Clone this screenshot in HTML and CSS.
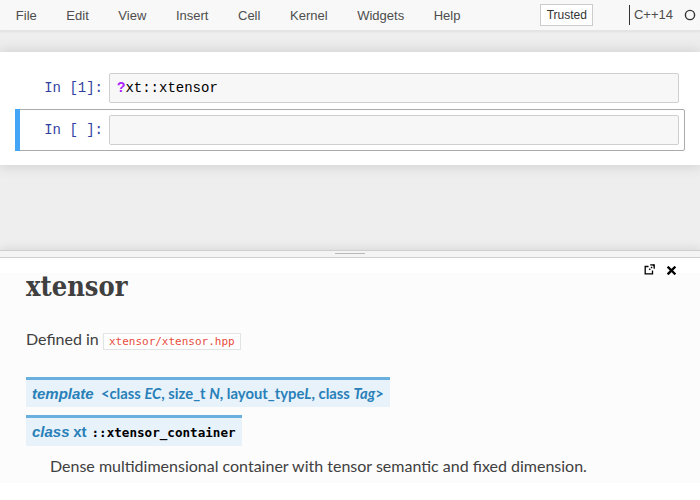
FILE: index.html
```html
<!DOCTYPE html>
<html>
<head>
<meta charset="utf-8">
<title>Notebook</title>
<link rel="stylesheet" href="styles.css">
</head>
<body>
<header class="menubar">
  <nav class="menus">
    <span class="menu">File</span>
    <span class="menu">Edit</span>
    <span class="menu">View</span>
    <span class="menu">Insert</span>
    <span class="menu">Cell</span>
    <span class="menu">Kernel</span>
    <span class="menu">Widgets</span>
    <span class="menu">Help</span>
  </nav>
  <div class="status">
    <span class="trusted">Trusted</span>
    <span class="kernel-name">C++14</span>
    <svg class="kernel-icon" width="12" height="12" viewBox="0 0 12 12"><circle cx="6" cy="6" r="4.6" fill="none" stroke="#333" stroke-width="1.4"/></svg>
  </div>
</header>
<main class="site">
  <div class="notebook">
    <div class="cell">
      <div class="prompt">In&nbsp;[1]:</div>
      <div class="input"><span class="qmark">?</span>xt::xtensor</div>
    </div>
    <div class="cell selected">
      <div class="prompt">In&nbsp;[&nbsp;]:</div>
      <div class="input"></div>
    </div>
  </div>
</main>
<section class="pager">
  <div class="divider"><span class="handle"></span></div>
  <div class="pager-contents">
    <div class="pager-buttons">
      <svg width="11" height="11" viewBox="0 0 11 11"><path d="M4.5 2.5H1.2v7.3h7.3V6.5" fill="none" stroke="#000" stroke-width="1.3"/><path d="M6.2 0.8h4v4" fill="none" stroke="#000" stroke-width="1.3"/><path d="M10 1L5 6" stroke="#000" stroke-width="1.3" stroke-dasharray="1.6 1"/></svg>
      <svg width="9" height="9" viewBox="0 0 9 9"><path d="M1.5 1.5L7.5 7.5M7.5 1.5L1.5 7.5" stroke="#000" stroke-width="2.4" stroke-linecap="square"/></svg>
    </div>
    <article class="doc">
      <h1 class="doc-title">xtensor</h1>
      <p class="defined">Defined in <code class="lit">xtensor/xtensor.hpp</code></p>
      <dl class="sig">
        <dt class="sig-head"><em class="kw">template</em>&nbsp;&nbsp;&lt;class <em>EC</em>, size_t <em>N</em>, layout_type<em>L</em>, class <em>Tag</em>&gt;</dt>
        <dt class="sig-head"><em class="kw">class</em>&nbsp;<span class="ns">xt</span><code class="descname">::xtensor_container</code></dt>
        <dd class="desc">Dense multidimensional container with tensor semantic and fixed dimension.</dd>
      </dl>
    </article>
  </div>
</section>
</body>
</html>
```

FILE: styles.css
```css
* { box-sizing: border-box; }
html, body { margin: 0; padding: 0; }
body {
  width: 700px;
  height: 500px;
  overflow: hidden;
  display: flex;
  flex-direction: column;
  font-family: "Liberation Sans", Arial, sans-serif;
  background: #fff;
}

/* menubar */
.menubar {
  height: 31px;
  flex: none;
  display: flex;
  align-items: center;
  justify-content: space-between;
  background: #f8f8f8;
  border-bottom: 1px solid #e4e4e4;
  box-shadow: 0 1px 2px rgba(0,0,0,0.06);
  position: relative;
  z-index: 2;
  font-size: 13px;
  color: #4d4d4d;
}
.menus { display: flex; padding-left: 1px; }
.menu { padding: 0 14.8px; }
.status { display: flex; align-items: center; padding-right: 4px; }
.trusted {
  border: 1px solid #ccc;
  background: #fff;
  font-size: 12px;
  color: #333;
  padding: 4px 5px 3px 6px;
  margin-right: 36px;
  line-height: 13px;
}
.kernel-name {
  border-left: 1px solid #333;
  padding-left: 4px;
  line-height: 20px;
  color: #4d4d4d;
}
.kernel-icon { margin-left: 11px; }

/* notebook */
.site {
  flex: 1;
  background: #eee;
  padding-top: 21px;
}
.notebook {
  background: #fff;
  box-shadow: 0 0 12px 1px rgba(87,87,87,0.2);
  padding: 15px 15px 14px 15px;
}
.cell {
  display: flex;
  align-items: center;
  border: 1px solid transparent;
  border-radius: 2px;
  padding: 5px;
  position: relative;
}
.cell.selected { border-color: #ababab; }
.cell.selected::before {
  content: "";
  position: absolute;
  left: -1px;
  top: -1px;
  bottom: -1px;
  width: 5px;
  background: #42a5f5;
}
.prompt {
  width: 88px;
  flex: none;
  text-align: right;
  padding-right: 6px;
  font-family: "Liberation Mono", monospace;
  font-size: 14px;
  color: #303f9f;
}
.input {
  flex: 1;
  height: 30px;
  background: #f7f7f7;
  border: 1px solid #cfcfcf;
  border-radius: 2px;
  padding: 0 7px;
  font-family: "Liberation Mono", monospace;
  font-size: 14px;
  line-height: 28px;
  color: #000;
}
.qmark { color: #a2f; font-weight: bold; }

/* pager */
.pager {
  height: 250px;
  flex: none;
  display: flex;
  flex-direction: column;
  box-shadow: 0 -3px 8px rgba(0,0,0,0.07);
  position: relative;
}
.divider {
  height: 8px;
  flex: none;
  background: #f4f4f4;
  border-top: 1px solid #cfcfcf;
  border-bottom: 1px solid #cfcfcf;
  display: flex;
  justify-content: center;
  padding-top: 2px;
}
.handle { width: 30px; height: 1px; background: #b8b8b8; }
.pager-contents {
  flex: 1;
  background: #fff;
  padding-top: 15px;
  position: relative;
}
.pager-buttons {
  position: absolute;
  top: 6px;
  right: 24px;
  display: flex;
  gap: 12px;
  align-items: flex-end;
}
.doc {
  background: #fcfcfc;
  padding: 0 0 5px 26px;
  font-family: Lato, "Liberation Sans", sans-serif;
  font-size: 16px;
  color: #404040;
}
.doc-title {
  margin: 0 0 26px 0;
  font-family: "DejaVu Serif Condensed", "DejaVu Serif", serif;
  font-stretch: condensed;
  font-weight: bold;
  font-size: 27px;
  line-height: 28px;
  color: #404040;
}
.defined { margin: 0 0 23px 0; line-height: 24px; }
.lit {
  font-family: "DejaVu Sans Mono", monospace;
  font-size: 11px;
  color: #e74c3c;
  background: #fff;
  border: 1px solid #e1e4e5;
  padding: 1px 5px;
}
.sig { margin: 0; }
.sig-head {
  display: table;
  background: #e7f2fa;
  border-top: 3px solid #6ab0de;
  padding: 6px;
  font-size: 14.8px;
  line-height: 15px;
  font-weight: bold;
  color: #2980b9;
  margin-bottom: 8px;
}
.sig-head em { font-style: italic; }
.kw { font-family: "Liberation Sans", Arial, sans-serif; font-size: 15px; }
.ns { font-family: "Liberation Sans", Arial, sans-serif; font-size: 15px; }
.descname {
  font-family: "DejaVu Sans Mono", monospace;
  font-size: 12.6px;
  font-weight: bold;
  color: #000;
  margin-left: 5px;
}
.desc { margin: 0 0 0 24px; line-height: 24px; }
```
